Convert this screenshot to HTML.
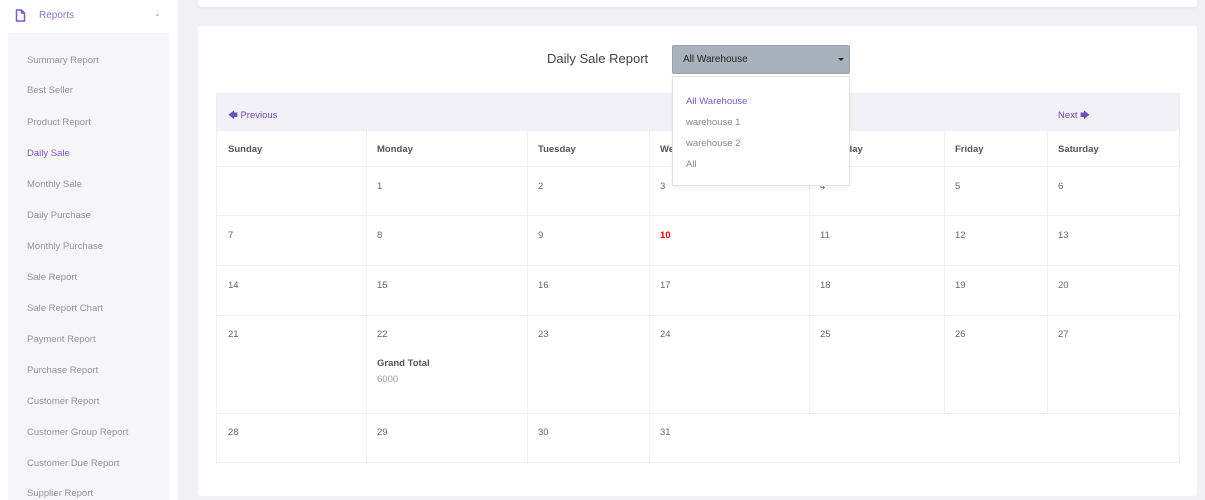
<!DOCTYPE html>
<html><head><style>
*{margin:0;padding:0;box-sizing:border-box}
body{width:1205px;height:500px;overflow:hidden;background:#f1f1f4;font-family:"Liberation Sans",sans-serif;position:relative}
.side{position:absolute;left:0;top:0;width:178px;height:500px;background:#fff}
.sub{position:absolute;left:8px;top:33px;width:161px;height:467px;background:#f6f6f8}
.mi{position:absolute;left:27px;font-size:9.5px;color:#939399}
.top{position:absolute;left:198px;top:-5px;width:999px;height:12px;background:#fff;border-radius:3px;box-shadow:0 1px 2px rgba(0,0,0,.05)}
.card{position:absolute;left:198px;top:26px;width:999px;height:470px;background:#fff;border-radius:3px}
.t{position:absolute;font-size:9.5px;color:#666}
.b{font-weight:bold;color:#555}
.hl{position:absolute;background:#efeff3}
</style></head><body>
<div class="side">
<svg style="position:absolute;left:15px;top:9px" width="11" height="13" viewBox="0 0 11 13"><path d="M1.5 1h5l3 3v8h-8z M6.5 1v3h3" fill="none" stroke="#7a5cc0" stroke-width="1.5"/></svg>
<div style="position:absolute;left:39px;top:10px;font-size:10px;color:#8a70c8">Reports</div>
<div style="position:absolute;left:154px;top:9px;font-size:8px;color:#999">⌄</div>
<div class="sub"></div>
<div class="mi" style="top:55px">Summary Report</div>
<div class="mi" style="top:85px">Best Seller</div>
<div class="mi" style="top:117px">Product Report</div>
<div class="mi" style="top:148px;color:#7a5cc0">Daily Sale</div>
<div class="mi" style="top:179px">Monthly Sale</div>
<div class="mi" style="top:210px">Daily Purchase</div>
<div class="mi" style="top:241px">Monthly Purchase</div>
<div class="mi" style="top:272px">Sale Report</div>
<div class="mi" style="top:303px">Sale Report Chart</div>
<div class="mi" style="top:334px">Payment Report</div>
<div class="mi" style="top:365px">Purchase Report</div>
<div class="mi" style="top:396px">Customer Report</div>
<div class="mi" style="top:427px">Customer Group Report</div>
<div class="mi" style="top:458px">Customer Due Report</div>
<div class="mi" style="top:488px">Supplier Report</div>
</div>
<div class="top"></div>
<div class="card"></div>
<div style="position:absolute;left:547px;top:51px;font-size:13px;color:#444">Daily Sale Report</div>
<div style="position:absolute;left:216px;top:93px;width:964px;height:370px;border:1px solid #efeff3"></div>
<div style="position:absolute;left:217px;top:94px;width:962px;height:37px;background:#f2f1f8"></div>
<div class="t" style="left:228px;top:108px;color:#6a4fb5">🡄 Previous</div>
<div class="t" style="left:1058px;top:108px;color:#6a4fb5">Next 🡆</div>
<div class="hl" style="left:217px;top:166px;width:962px;height:1px"></div>
<div class="hl" style="left:217px;top:215px;width:962px;height:1px"></div>
<div class="hl" style="left:217px;top:265px;width:962px;height:1px"></div>
<div class="hl" style="left:217px;top:315px;width:962px;height:1px"></div>
<div class="hl" style="left:217px;top:413px;width:962px;height:1px"></div>
<div class="hl" style="left:366px;top:131px;width:1px;height:332px"></div>
<div class="hl" style="left:527px;top:131px;width:1px;height:332px"></div>
<div class="hl" style="left:649px;top:131px;width:1px;height:332px"></div>
<div class="hl" style="left:809px;top:131px;width:1px;height:282px"></div>
<div class="hl" style="left:944px;top:131px;width:1px;height:282px"></div>
<div class="hl" style="left:1047px;top:131px;width:1px;height:282px"></div>
<div class="t b" style="left:228px;top:144px">Sunday</div>
<div class="t b" style="left:377px;top:144px">Monday</div>
<div class="t b" style="left:538px;top:144px">Tuesday</div>
<div class="t b" style="left:660px;top:144px">Wednesday</div>
<div class="t b" style="left:820px;top:144px">Thursday</div>
<div class="t b" style="left:955px;top:144px">Friday</div>
<div class="t b" style="left:1058px;top:144px">Saturday</div>
<div class="t" style="left:377px;top:181px">1</div><div class="t" style="left:538px;top:181px">2</div><div class="t" style="left:660px;top:181px">3</div><div class="t" style="left:820px;top:181px">4</div><div class="t" style="left:955px;top:181px">5</div><div class="t" style="left:1058px;top:181px">6</div>
<div class="t" style="left:228px;top:230px">7</div><div class="t" style="left:377px;top:230px">8</div><div class="t" style="left:538px;top:230px">9</div><div class="t" style="left:660px;top:230px;color:#d00;font-weight:bold">10</div><div class="t" style="left:820px;top:230px">11</div><div class="t" style="left:955px;top:230px">12</div><div class="t" style="left:1058px;top:230px">13</div>
<div class="t" style="left:228px;top:280px">14</div><div class="t" style="left:377px;top:280px">15</div><div class="t" style="left:538px;top:280px">16</div><div class="t" style="left:660px;top:280px">17</div><div class="t" style="left:820px;top:280px">18</div><div class="t" style="left:955px;top:280px">19</div><div class="t" style="left:1058px;top:280px">20</div>
<div class="t" style="left:228px;top:329px">21</div><div class="t" style="left:377px;top:329px">22</div><div class="t" style="left:538px;top:329px">23</div><div class="t" style="left:660px;top:329px">24</div><div class="t" style="left:820px;top:329px">25</div><div class="t" style="left:955px;top:329px">26</div><div class="t" style="left:1058px;top:329px">27</div>
<div class="t b" style="left:377px;top:358px">Grand Total</div>
<div class="t" style="left:377px;top:374px;color:#999">6000</div>
<div class="t" style="left:228px;top:427px">28</div><div class="t" style="left:377px;top:427px">29</div><div class="t" style="left:538px;top:427px">30</div><div class="t" style="left:660px;top:427px">31</div>
<div style="position:absolute;left:672px;top:45px;width:178px;height:29px;background:#a9b1ba;border:1px solid #9aa2ab;border-radius:2px"></div>
<div style="position:absolute;left:683px;top:54px;font-size:10px;color:#222">All Warehouse</div>
<div style="position:absolute;left:838px;top:58px;width:0;height:0;border-left:3px solid transparent;border-right:3px solid transparent;border-top:3px solid #222"></div>
<div style="position:absolute;left:672px;top:76px;width:178px;height:110px;background:#fff;border:1px solid #e4e4e8;box-shadow:0 2px 4px rgba(0,0,0,.06)"></div>
<div style="position:absolute;left:686px;top:96px;font-size:9.5px;color:#7a5cc0">All Warehouse</div>
<div style="position:absolute;left:686px;top:117px;font-size:9.5px;color:#888">warehouse 1</div>
<div style="position:absolute;left:686px;top:138px;font-size:9.5px;color:#888">warehouse 2</div>
<div style="position:absolute;left:686px;top:159px;font-size:9.5px;color:#888">All</div>
</body></html>
